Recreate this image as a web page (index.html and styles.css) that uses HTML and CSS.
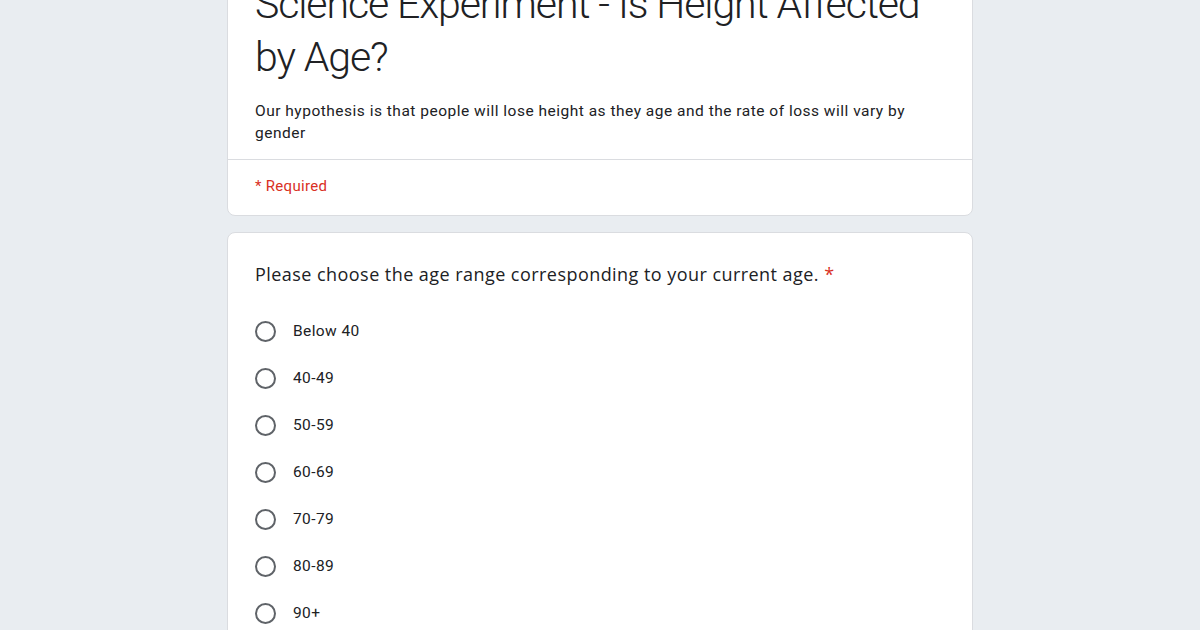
FILE: index.html
```html
<!DOCTYPE html>
<html>
<head>
<meta charset="utf-8">
<link rel="stylesheet" href="styles.css">
</head>
<body>
<div class="page">
  <div class="card header-card">
    <div class="header-main">
      <h1 class="title">Science Experiment - Is Height Affected by Age?</h1>
      <p class="desc">Our hypothesis is that people will lose height as they age and the rate of loss will vary by gender</p>
    </div>
    <div class="required-note">* Required</div>
  </div>
  <div class="card question-card">
    <div class="question">Please choose the age range corresponding to your current age. <span class="star">*</span></div>
    <div class="options">
      <label class="option"><span class="radio"></span><span class="opt-label">Below 40</span></label>
      <label class="option"><span class="radio"></span><span class="opt-label">40-49</span></label>
      <label class="option"><span class="radio"></span><span class="opt-label">50-59</span></label>
      <label class="option"><span class="radio"></span><span class="opt-label">60-69</span></label>
      <label class="option"><span class="radio"></span><span class="opt-label">70-79</span></label>
      <label class="option"><span class="radio"></span><span class="opt-label">80-89</span></label>
      <label class="option"><span class="radio"></span><span class="opt-label">90+</span></label>
    </div>
  </div>
</div>
</body>
</html>
```
FILE: styles.css
```css
html, body {
  margin: 0;
  padding: 0;
  background: #e9edf1;
  height: 630px;
  overflow: hidden;
}
.page {
  width: 746px;
  margin: -58px auto 0;
  display: flex;
  flex-direction: column;
  gap: 16px;
}
.card {
  background: #ffffff;
  border: 1px solid #dadce0;
  border-radius: 8px;
}
.header-main {
  padding: 35px 27px 15px;
  border-bottom: 1px solid #dadce0;
}
.title {
  margin: 0;
  font-family: Roboto, "Open Sans", sans-serif;
  font-weight: 300;
  font-size: 41px;
  line-height: 53px;
  color: #202124;
  letter-spacing: -1.1px;
}
.desc {
  margin: 16px 0 0;
  font-family: Roboto, "Liberation Sans", sans-serif;
  font-size: 15.5px;
  line-height: 22px;
  color: #202124;
  letter-spacing: 0.5px;
}
.required-note {
  padding: 16px 27px 19px;
  font-family: Roboto, "Liberation Sans", sans-serif;
  font-size: 15px;
  line-height: 20px;
  color: #d93025;
  letter-spacing: 0.3px;
}
.question-card {
  padding: 29px 27px 20px;
}
.question {
  font-family: "Open Sans", Roboto, sans-serif;
  font-size: 18px;
  line-height: 24px;
  color: #202124;
  letter-spacing: 0.45px;
}
.star {
  color: #d93025;
}
.options {
  display: flex;
  flex-direction: column;
  margin-top: 33px;
  gap: 23px;
}
.option {
  display: flex;
  align-items: center;
  gap: 17px;
  height: 24px;
}
.radio {
  box-sizing: border-box;
  width: 21px;
  height: 21px;
  border: 2px solid #5f6368;
  border-radius: 50%;
  flex: none;
}
.opt-label {
  font-family: Roboto, "Liberation Sans", sans-serif;
  font-size: 15.5px;
  color: #202124;
  letter-spacing: 0.4px;
}
```
